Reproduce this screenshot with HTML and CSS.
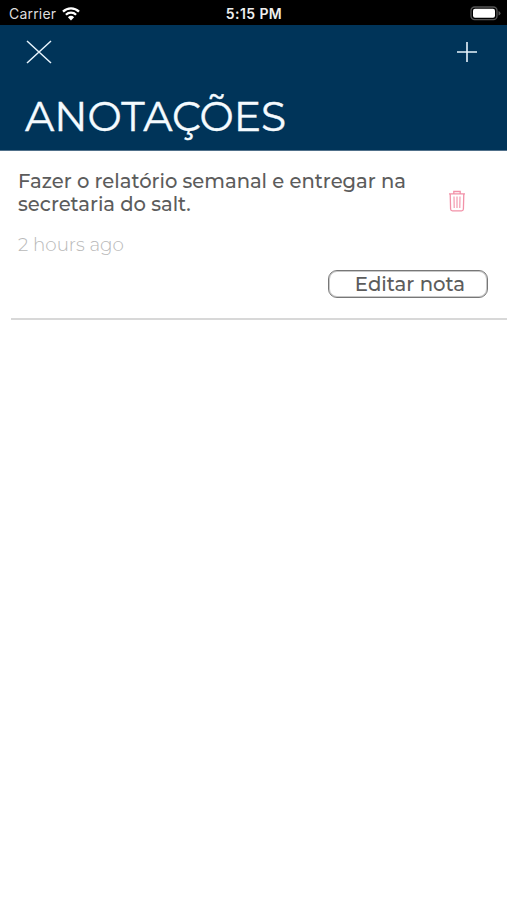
FILE: index.html
```html
<!DOCTYPE html>
<html lang="pt-BR">
<head>
    <meta charset="UTF-8">
    <meta name="viewport" content="width=device-width, initial-scale=1.0">
    <title>Anotações</title>
    <link rel="stylesheet" href="styles.css">
</head>
<body>

    <div class="status-bar">
        <div class="carrier">
            <span>Carrier</span>
            <svg width="18" height="14" viewBox="0 0 18 14">
                <path d="M1 4.600a11.500 11.500 0 0 1 16 0M3.900 7.800a7.300 7.300 0 0 1 10.200 0" fill="none" stroke="#fff" stroke-width="2.3"/>
                <path d="M5.900 10.200a4.500 4.500 0 0 1 6.200 0L9 13.400z" fill="#fff"/>
            </svg>
        </div>
        <span class="time">5:15 PM</span>
        <svg class="battery" width="31" height="15" viewBox="0 0 31 15">
            <rect x="1" y="1" width="26" height="12.6" rx="3.6" fill="none" stroke="#555" stroke-width="1.3"/>
            <rect x="3" y="2.8" width="22" height="9" rx="2" fill="#fff"/>
            <path d="M28.5 5v4.600q2-.7 2-2.300t-2-2.300z" fill="#555"/>
        </svg>
    </div>

    <header class="header">
        <div class="actions">
            <button class="icon-button" aria-label="Fechar">
                <svg width="26" height="24" viewBox="0 0 26 24">
                    <path d="M1 1l24 22M25 1L1 23" stroke="#e6f3fc" stroke-width="1.5"/>
                </svg>
            </button>
            <button class="icon-button" aria-label="Adicionar">
                <svg width="20" height="20" viewBox="0 0 20 20">
                    <path d="M0 10h20M10 0v20" stroke="#e6f3fc" stroke-width="1.6"/>
                </svg>
            </button>
        </div>
        <h1>ANOTAÇÕES</h1>
    </header>

    <main class="note">
        <div class="note-top">
            <p class="note-text">Fazer o relatório semanal e entregar na<br>secretaria do salt.</p>
            <button class="icon-button delete-button" aria-label="Excluir">
                <svg width="18" height="22" viewBox="0 0 18 22" fill="none" stroke="#f291a8" stroke-width="1.3">
                    <path d="M1 3.900h16M5.800 3.500V1.500h6.400v2M2.200 4l.4 15q.1 1.800 1.800 1.800h9.200q1.700 0 1.800-1.800l.4-15"/>
                    <path d="M6 6.500l.2 11.500M9 6.500V18M12 6.500L11.800 18" stroke-width="1.100"/>
                </svg>
            </button>
        </div>
        <p class="note-date">2 hours ago</p>
        <button class="edit-button">Editar nota</button>
    </main>

</body>
</html>
```
FILE: styles.css
```css
* {
    box-sizing: border-box;
}
body {
    margin: 0;
    background-color: #fff;
    font-family: Montserrat, Inter, sans-serif;
}
h1, p {
    margin: 0;
    white-space: nowrap;
}
button {
    border: none;
    background: none;
    padding: 0;
    cursor: pointer;
}
svg {
    display: block;
}
.status-bar {
    display: grid;
    grid-template-columns: 1fr auto 1fr;
    align-items: center;
    height: 25px;
    padding: 2px 6px 0 9px;
    background-color: #000;
    color: #ddd;
    font-family: Inter, sans-serif;
    font-size: 14px;
}
.carrier {
    display: flex;
    align-items: center;
    gap: 6px;
    letter-spacing: 0.2px;
}
.time {
    margin-right: 2px;
    font-weight: 600;
    letter-spacing: 0.4px;
    color: #eee;
}
.battery {
    justify-self: end;
}
.header {
    height: 126px;
    padding: 15px 30px 0 25px;
    background-color: #003459;
    border-bottom: 1px solid #50708a;
}
.actions {
    display: flex;
    justify-content: space-between;
    align-items: center;
    height: 24px;
    padding-left: 1px;
}
h1 {
    margin-top: 27px;
    color: #f5fbff;
    font-size: 40.8px;
    font-weight: 400;
    line-height: 52px;
    -webkit-text-stroke: 0.4px #f5fbff;
}
.note {
    display: flex;
    flex-direction: column;
    height: 169px;
    margin-left: 11px;
    padding: 18px 19px 0 7px;
    border-bottom: 2px solid #d8d8d8;
}
.note-top {
    display: flex;
    justify-content: space-between;
    align-items: flex-start;
    height: 48px;
    padding-right: 22px;
}
.note-text {
    padding-top: 1px;
    color: #5c5c5c;
    font-size: 19.55px;
    font-weight: 500;
    line-height: 23px;
}
.delete-button {
    margin-top: 21px;
}
.note-date {
    margin-top: 16px;
    color: #b8b8b8;
    font-size: 18.3px;
    font-weight: 300;
    line-height: 24px;
}
.edit-button {
    align-self: flex-end;
    width: 160px;
    height: 28px;
    margin-top: 13px;
    padding-left: 4px;
    border: 1px solid #777;
    border-radius: 9px;
    box-shadow: inset 0 0 0 1px #c8c8c8;
    color: #5c5c5c;
    font-family: inherit;
    font-size: 19.7px;
    font-weight: 500;
    line-height: 24px;
}
```
